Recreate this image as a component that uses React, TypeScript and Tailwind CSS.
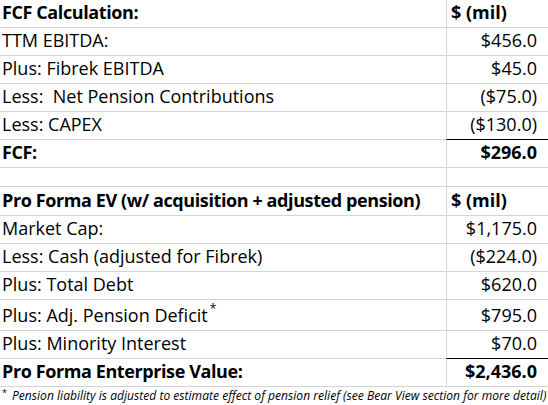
const font = { fontFamily: '"Open Sans", "Liberation Sans", sans-serif' }

type Row = {
  label: React.ReactNode
  value?: string
  h: string
  bold?: boolean
  header?: boolean
  topBlack?: boolean
}

const rows: Row[] = [
  { label: 'FCF Calculation:', value: '$ (mil)', h: 'h-[28px]', bold: true, header: true },
  { label: 'TTM EBITDA:', value: '$456.0', h: 'h-[28px]' },
  { label: 'Plus: Fibrek EBITDA', value: '$45.0', h: 'h-[28px]' },
  { label: 'Less:  Net Pension Contributions', value: '($75.0)', h: 'h-[28px]' },
  { label: 'Less: CAPEX', value: '($130.0)', h: 'h-[28px]' },
  { label: 'FCF:', value: '$296.0', h: 'h-[28px]', bold: true, topBlack: true },
  { label: '', value: '', h: 'h-[19px]' },
  { label: 'Pro Forma EV (w/ acquisition + adjusted pension)', value: '$ (mil)', h: 'h-[29px]', bold: true, header: true },
  { label: 'Market Cap:', value: '$1,175.0', h: 'h-[28px]' },
  { label: 'Less: Cash (adjusted for Fibrek)', value: '($224.0)', h: 'h-[28px]' },
  { label: 'Plus: Total Debt', value: '$620.0', h: 'h-[28px]' },
  {
    label: (
      <>
        Plus: Adj. Pension Deficit
        <span className="text-[12px] relative -top-[9px] ml-[2px]">*</span>
      </>
    ),
    value: '$795.0',
    h: 'h-[31px]',
  },
  { label: 'Plus: Minority Interest', value: '$70.0', h: 'h-[28px]' },
  { label: 'Pro Forma Enterprise Value:', value: '$2,436.0', h: 'h-[28px]', bold: true, topBlack: true },
]

export default function App() {
  return (
    <div className="w-[548px] h-[405px] bg-white text-black overflow-hidden" style={font}>
      {rows.map((r, i) => {
        const nextBlack = rows[i + 1]?.topBlack
        return (
          <div key={i} className={`flex ${r.h} border-b border-[#d4d4d4] text-[18px] leading-none`}>
            <div
              className={`w-[446px] flex items-end pl-[2px] pb-[6px] whitespace-pre ${
                r.bold ? 'font-bold tracking-[-0.4px]' : ''
              }`}
            >
              {r.label}
            </div>
            <div
              className={`flex-1 flex items-end pb-[6px] border-l border-[#d4d4d4] -mb-px border-b ${
                nextBlack ? 'border-b-black' : 'border-b-[#d4d4d4]'
              } ${r.header ? 'justify-start pl-[4px]' : 'justify-end pr-[11px]'} ${r.bold ? 'font-bold' : ''}`}
            >
              {r.value}
            </div>
          </div>
        )
      })}
      <div className="flex items-start h-[18px] pt-[1px] text-[12.1px] italic leading-none whitespace-nowrap">
        <span className="text-[9px] pl-[2px] w-[12px] shrink-0 not-italic">*</span>
        <span className="pt-[2px]">
          Pension liability is adjusted to estimate effect of pension relief (see Bear View section for more detail)
        </span>
      </div>
    </div>
  )
}
